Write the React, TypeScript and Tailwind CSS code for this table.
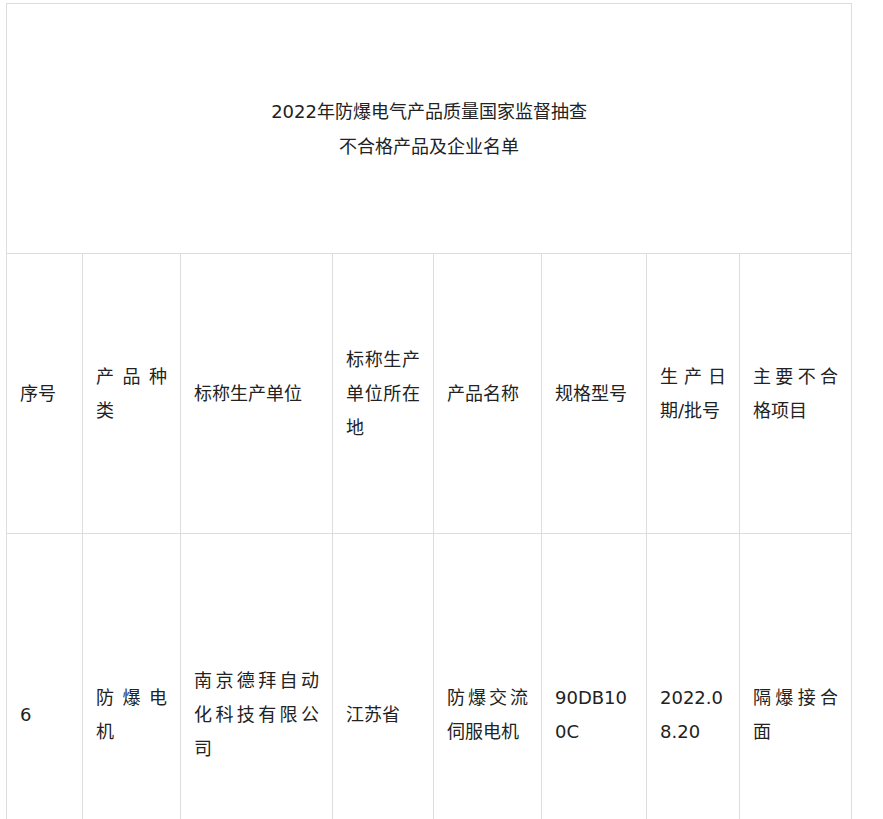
const cell =
  "border border-[#dddddd] px-[13px] align-middle text-justify break-all";

const cols = [76, 98, 152, 101, 108, 105, 93, 112];

const head = [
  "序号",
  "产品种类",
  "标称生产单位",
  "标称生产单位所在地",
  "产品名称",
  "规格型号",
  "生产日期/批号",
  "主要不合格项目",
];

const row = [
  "6",
  "防爆电机",
  "南京德拜自动化科技有限公司",
  "江苏省",
  "防爆交流伺服电机",
  "90DB100C",
  "2022.08.20",
  "隔爆接合面",
];

export default function App() {
  return (
    <div
      className="min-h-screen bg-white pl-[6px] pt-[3px] text-[18px] leading-[34px] text-[#222222]"
      style={{ fontFamily: '"DejaVu Sans", "Noto Sans CJK SC", sans-serif' }}
    >
      <table className="table-fixed border-collapse" style={{ width: 845 }}>
        <colgroup>
          {cols.map((w, i) => (
            <col key={i} style={{ width: w }} />
          ))}
        </colgroup>
        <tbody>
          <tr className="h-[250px]">
            <td colSpan={8} className={cell + " text-center leading-[35px]"}>
              <p className="text-center">2022年防爆电气产品质量国家监督抽查</p>
              <p className="text-center">不合格产品及企业名单</p>
            </td>
          </tr>
          <tr className="h-[280px]">
            {head.map((t, i) => (
              <td key={i} className={cell}>
                {t}
              </td>
            ))}
          </tr>
          <tr className="h-[362px]">
            {row.map((t, i) => (
              <td key={i} className={cell}>
                {t}
              </td>
            ))}
          </tr>
        </tbody>
      </table>
    </div>
  );
}
